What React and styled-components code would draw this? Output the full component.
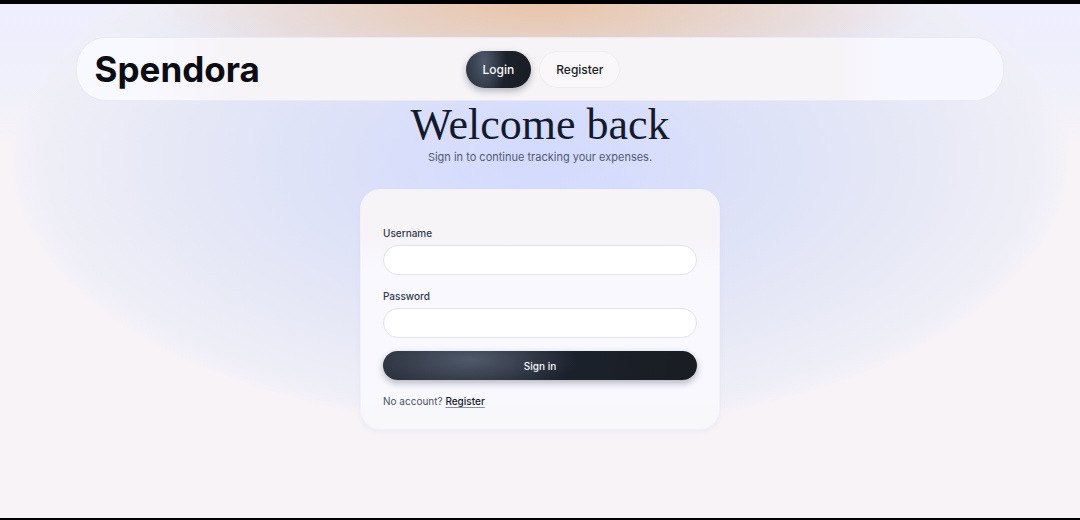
import React, { useState } from 'react';
import styled, { createGlobalStyle, css } from 'styled-components';

const GlobalStyle = createGlobalStyle`
	*, *::before, *::after {
		box-sizing: border-box;
	}

	body {
		margin: 0;
		font-family: 'Inter', 'Liberation Sans', sans-serif;
		color: #0f172a;
		background: #f7f3f7;
	}

	button, input {
		font-family: inherit;
	}
`

const Page = styled.div`
	display: flex;
	flex-direction: column;
	align-items: center;
	min-height: 100vh;
	padding: 33px 24px 48px;
	border-top: 4px solid #000;
	border-bottom: 2px solid #000;
	background:
		radial-gradient(ellipse 36% 88px at 50% 0, rgba(234, 192, 158, .88), rgba(234, 198, 170, .6) 45%, rgba(234, 204, 184, 0)),
		radial-gradient(ellipse 49% 270px at 50% 156px, #d2daff, #dce1f8 38%, #e5e7f6 66%, #eeeef7 92%, rgba(240, 239, 248, .8) 97%, rgba(247, 243, 247, 0)),
		linear-gradient(#eeeeff, #eff0fa 80px, #f7f3f7 140px);
`

const Navbar = styled.header`
	display: grid;
	grid-template-columns: 1fr auto 1fr;
	align-items: center;
	width: 90%;
	min-height: 64px;
	padding: 12px 12px 12px 18px;
	border: 1px solid #e9eaf5;
	border-radius: 30px;
	background: linear-gradient(90deg, #f8f9ff 5%, #f7f4f8 16%, #f7f4f8 82%, #f7f8ff 88%);
`

const Brand = styled.a`
	justify-self: start;
	font-size: 35px;
	line-height: 38px;
	font-weight: 700;
	color: #0b0d12;
	text-decoration: none;
`

const NavButtons = styled.nav`
	display: flex;
	gap: 8px;
`

const darkSurface = css`
	color: #f8fafc;
	background:
		radial-gradient(ellipse 34% 120% at 28% 30%, rgba(100, 110, 130, .7), rgba(100, 110, 130, 0)),
		linear-gradient(100deg, #29303b, #1b222d 55%, #1a1d22);
	box-shadow: 0 3px 7px rgba(15, 23, 42, .3);
`

const NavButton = styled.button`
	height: 37px;
	padding: 0 17px;
	border: 0;
	border-radius: 20px;
	font-size: 12px;
	font-weight: 500;
	cursor: pointer;

	${({ $active }) => $active ? darkSurface : css`
		color: #1a1d24;
		background: #f9f7fa;
		box-shadow: inset 0 0 0 1px #efedf2;
	`}
`

const Intro = styled.div`
	text-align: center;

	h1 {
		margin: 0;
		font-family: 'Liberation Serif', serif;
		font-size: 44px;
		line-height: 48px;
		font-weight: 400;
		color: #131a2e;
	}

	p {
		margin: 0;
		font-size: 11px;
		line-height: 16px;
		color: #535a70;
	}
`

const Card = styled.form`
	display: flex;
	flex-direction: column;
	gap: 13px;
	width: 100%;
	max-width: 360px;
	margin-top: 24px;
	padding: 35px 22px 20px;
	border: 1px solid #f0f1fb;
	border-radius: 20px;
	background: linear-gradient(#f7f4f8 20%, #f8f8fe 32%, #f8f8fe 84%, #f8f7f9);
	box-shadow: 0 2px 5px rgba(170, 180, 220, .12);
`

const Field = styled.div`
	display: flex;
	flex-direction: column;
	gap: 4px;

	label {
		font-size: 10px;
		line-height: 16px;
		font-weight: 500;
		color: #303950;
	}

	input {
		width: 100%;
		height: 30px;
		padding: 0 14px;
		border: 1px solid #e0e3ec;
		border-radius: 15px;
		background: #fff;
		font-size: 11px;
		color: #0f172a;
		outline: none;
	}

	input:focus {
		border-color: #a9b4dc;
	}
`

const SubmitButton = styled.button`
	height: 29px;
	border: 0;
	border-radius: 15px;
	font-size: 10px;
	font-weight: 500;
	cursor: pointer;
	${darkSurface}
`

const Footnote = styled.p`
	margin: 0;
	font-size: 10px;
	line-height: 16px;
	color: #4b5368;

	a {
		font-weight: 500;
		color: #151b2c;
		text-decoration-color: #8b90a0;
		text-underline-offset: 2px;
		text-decoration-thickness: 1px;
	}
`

function App() {
	const [username, setUsername] = useState('');
	const [password, setPassword] = useState('');

	return(
		<>
			<GlobalStyle/>
			<Page>
				<Navbar>
					<Brand href="/">Spendora</Brand>
					<NavButtons>
						<NavButton type="button" $active>Login</NavButton>
						<NavButton type="button">Register</NavButton>
					</NavButtons>
				</Navbar>
				<Intro>
					<h1>Welcome back</h1>
					<p>Sign in to continue tracking your expenses.</p>
				</Intro>
				<Card onSubmit={(e) => e.preventDefault()}>
					<Field>
						<label htmlFor="username">Username</label>
						<input
							id="username"
							type="text"
							value={username}
							onChange={(e) => setUsername(e.target.value)}
						/>
					</Field>
					<Field>
						<label htmlFor="password">Password</label>
						<input
							id="password"
							type="password"
							value={password}
							onChange={(e) => setPassword(e.target.value)}
						/>
					</Field>
					<SubmitButton type="submit">Sign in</SubmitButton>
					<Footnote>
						No account? <a href="/register">Register</a>
					</Footnote>
				</Card>
			</Page>
		</>
	)
}

export default App;
